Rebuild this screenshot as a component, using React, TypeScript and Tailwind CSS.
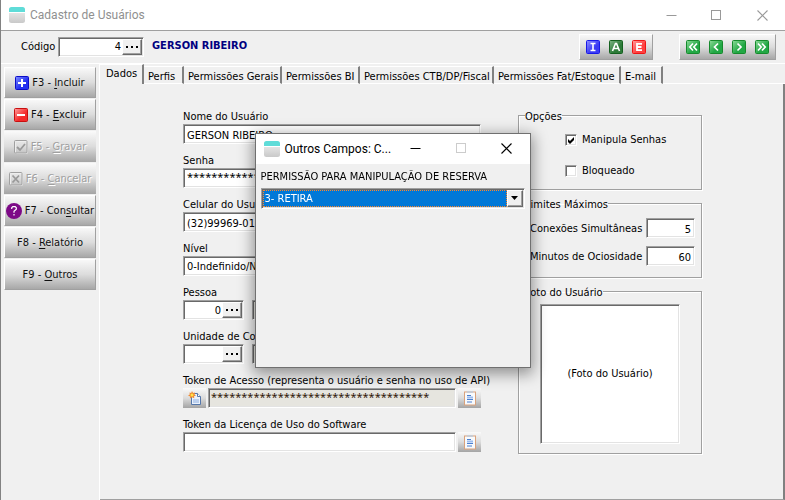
import { useState } from "react";
import type { ReactNode } from "react";

const SUNKEN =
  "border border-t-[#a0a0a0] border-l-[#a0a0a0] border-r-white border-b-white shadow-[inset_1px_1px_0_#696969,inset_-1px_-1px_0_#e3e3e3]";
const RAISED =
  "border border-t-white border-l-white border-r-[#696969] border-b-[#696969] bg-[#f0f0f0] shadow-[inset_-1px_-1px_0_#a0a0a0]";
const METAL = "bg-linear-to-b from-[#fafafa] via-[#dcdcdc] to-[#a4a4a4] bg-origin-border";
const BOX = "h-5 min-w-0 bg-white px-[3px] text-black outline-none";
const FIELD = `${BOX} pt-0.5`;

function AppLogo() {
  return (
    <svg className="size-4 shrink-0" viewBox="0 0 16 16" aria-hidden="true">
      <defs>
        <linearGradient id="logo-body" x1="0" y1="0" x2="0" y2="1">
          <stop offset="0" stopColor="#f4f4f4" />
          <stop offset="1" stopColor="#c9c9c9" />
        </linearGradient>
      </defs>
      <rect width="16" height="16" rx="2.5" fill="url(#logo-body)" />
      <path d="M0 5V2.5A2.5 2.5 0 0 1 2.5 0h11A2.5 2.5 0 0 1 16 2.5V5z" fill="#5fdcd8" />
      <path d="M0 5h16v1H0z" fill="#fff" />
    </svg>
  );
}

function WindowButtons({ color, maxColor }: { color: string; maxColor: string }) {
  return (
    <div className="flex h-full items-center">
      <button aria-label="Minimizar" className="flex h-full w-[46px] items-center justify-center">
        <svg width="11" height="11" viewBox="0 0 11 11">
          <path d="M0.5 5.5h10" stroke={color} />
        </svg>
      </button>
      <button aria-label="Maximizar" className="flex h-full w-[45px] items-center justify-center">
        <svg width="11" height="11" viewBox="0 0 11 11">
          <rect x="0.5" y="0.5" width="9" height="9" fill="none" stroke={maxColor} />
        </svg>
      </button>
      <button aria-label="Fechar" className="flex h-full w-[46px] items-center justify-center">
        <svg width="11" height="11" viewBox="0 0 11 11">
          <path d="M0.5 0.5l10 10M10.5 0.5l-10 10" stroke={color} strokeWidth="1.1" />
        </svg>
      </button>
    </div>
  );
}

function Ellipsis({ label }: { label: string }) {
  return (
    <button aria-label={label} className={`flex h-4 w-5 shrink-0 items-center justify-center ${RAISED}`}>
      <svg width="12" height="2" viewBox="0 0 12 2">
        <path d="M0 0h2v2H0zM5 0h2v2H5zM10 0h2v2h-2z" fill="#000" />
      </svg>
    </button>
  );
}

function LookupField({ id, value, label, width }: { id: string; value: string; label: string; width: string }) {
  return (
    <div className={`flex h-5 items-center bg-white p-px ${SUNKEN} ${width}`}>
      <input
        id={id}
        defaultValue={value}
        className="h-4 w-full min-w-0 bg-transparent pt-0.5 pr-px text-right outline-none"
      />
      <Ellipsis label={label} />
    </div>
  );
}

function SquareIcon({ from, to, edge, children }: { from: string; to: string; edge: string; children: ReactNode }) {
  const id = "sq" + edge.slice(1);
  return (
    <svg className="size-3.5 shrink-0" viewBox="0 0 14 14" aria-hidden="true">
      <defs>
        <linearGradient id={id} x1="0" y1="0" x2="1" y2="1">
          <stop offset="0" stopColor={from} />
          <stop offset="0.6" stopColor={to} />
        </linearGradient>
      </defs>
      <rect x="0.5" y="0.5" width="13" height="13" rx="1" fill={`url(#${id})`} stroke={edge} />
      {children}
    </svg>
  );
}

function GreenArrow({ d }: { d: string }) {
  return (
    <SquareIcon from="#8fdc9a" to="#22a845" edge="#168a2c">
      <path d={d} fill="none" stroke="#fff" strokeWidth="1.7" />
    </SquareIcon>
  );
}

function SideButton({
  icon,
  before,
  hot,
  after,
  disabled,
}: {
  icon?: ReactNode;
  before: string;
  hot: string;
  after: string;
  disabled?: boolean;
}) {
  return (
    <button
      disabled={disabled}
      className={`flex h-[31px] w-full items-center justify-center gap-[3px] border whitespace-nowrap ${METAL} ${
        disabled
          ? "border-transparent text-[#a0a0a0] [text-shadow:1px_1px_0_#fff]"
          : "border-t-white border-r-[#a0a0a0] border-b-[#a0a0a0] border-l-white text-[#101010]"
      }`}
    >
      {icon}
      <span className="pt-0.5">
        {before}
        <span className="underline underline-offset-2">{hot}</span>
        {after}
      </span>
    </button>
  );
}

function DisabledIcon({ children }: { children: ReactNode }) {
  return (
    <svg className="size-3.5 shrink-0" viewBox="0 0 14 14" aria-hidden="true">
      <rect x="1.5" y="1.5" width="12" height="12" rx="1" fill="none" stroke="#eee" />
      <rect x="0.5" y="0.5" width="12.5" height="12.5" rx="1" fill="none" stroke="#a0a0a0" />
      {children}
    </svg>
  );
}

function Field({ id, label, children }: { id: string; label: string; children: ReactNode }) {
  return (
    <div className="flex flex-col">
      <label htmlFor={id} className="h-4 leading-[18px] whitespace-nowrap">
        {label}
      </label>
      <div className="flex items-center">{children}</div>
    </div>
  );
}

function CopyButton({ label }: { label: string }) {
  return (
    <button aria-label={label} className={`flex h-5 w-[23px] shrink-0 items-center justify-center ${METAL}`}>
      <svg width="12" height="15" viewBox="0 0 12 15">
        <rect x="0.5" y="1" width="11" height="13" fill="#f8fafc" stroke="#d9a27c" />
        <rect x="3" y="0" width="6" height="2" fill="#c8ccd4" />
        <path d="M3 4.5h4M3 8.5h6M3 11h5" stroke="#4a7fd0" />
        <path d="M3 6.5h6" stroke="#9bbcf0" strokeWidth="2" />
      </svg>
    </button>
  );
}

function Check({ id, label, initial }: { id: string; label: string; initial: boolean }) {
  const [on, setOn] = useState(initial);
  return (
    <div className="flex items-center gap-[5px]">
      <span className="relative flex size-3">
        <input
          id={id}
          type="checkbox"
          checked={on}
          onChange={() => setOn(!on)}
          className={`size-3 appearance-none bg-white ${SUNKEN}`}
        />
        {on && (
          <svg className="pointer-events-none absolute inset-0 size-3" viewBox="0 0 12 12">
            <path d="M3 5v3l2 2 4-4V3L5 7z" fill="#000" />
          </svg>
        )}
      </span>
      <label htmlFor={id} className="whitespace-nowrap">
        {label}
      </label>
    </div>
  );
}

const TABS = [
  { name: "Perfis", width: "w-10" },
  { name: "Permissões Gerais", width: "w-[98px]" },
  { name: "Permissões BI", width: "w-[78px]" },
  { name: "Permissões CTB/DP/Fiscal", width: "w-[134px]" },
  { name: "Permissões Fat/Estoque", width: "w-[127px]" },
  { name: "E-mail", width: "w-[42px]" },
];

const GROUP = "min-w-0 border border-[#a0a0a0] shadow-[1px_1px_0_#fff,inset_1px_1px_0_#fff]";
const LEGEND = "ml-1.5 h-3.5 leading-[18px]";

export default function App() {
  return (
    <div className="flex min-h-screen flex-col border-l border-[#828282] bg-[#f0f0f0] font-['DejaVu_Sans_Condensed','Noto_Sans',sans-serif] text-[11px] text-black">
      <header className="flex h-[30px] shrink-0 items-center justify-between bg-white">
        <h1 className="flex items-center gap-[5px] pl-2 font-['Roboto',sans-serif] text-xs text-[#909090]">
          <AppLogo />
          Cadastro de Usuários
        </h1>
        <WindowButtons color="#999999" maxColor="#999999" />
      </header>

      <div className="flex h-[34px] shrink-0 items-center border-t border-b border-t-[#a0a0a0] border-b-white pr-[9px] pb-px pl-5">
        <label htmlFor="codigo" className="w-[37px] pt-0.5">
          Código
        </label>
        <LookupField id="codigo" value="4" label="Buscar código" width="w-[86px]" />
        <strong className="ml-2 text-[#000080]">GERSON RIBEIRO</strong>
        <div
          className={`ml-auto flex h-[26px] items-center gap-[9px] border border-t-white border-r-[#a0a0a0] border-b-[#a0a0a0] border-l-white px-1.5 ${METAL}`}
        >
          <button aria-label="Incluir">
            <SquareIcon from="#8f8fff" to="#3a3af4" edge="#1818e8">
              <path d="M4.5 3.5h5M7 3.5v7M4.5 10.5h5" stroke="#fff" strokeWidth="1.6" />
            </SquareIcon>
          </button>
          <button aria-label="Alterar">
            <SquareIcon from="#7fb685" to="#2c7a38" edge="#14601e">
              <path d="M3.5 11L6.5 3.5h1l3 7.500M4.800 8.500h4.500" fill="none" stroke="#fff" strokeWidth="1.6" />
            </SquareIcon>
          </button>
          <button aria-label="Excluir">
            <SquareIcon from="#ff9f9f" to="#ff4040" edge="#ee1414">
              <path d="M10 3.800H5v6.400h5M5 7h4.500" fill="none" stroke="#fff" strokeWidth="1.8" />
            </SquareIcon>
          </button>
        </div>
        <div
          className={`ml-[26px] flex h-[26px] items-center gap-[9px] border border-t-white border-r-[#a0a0a0] border-b-[#a0a0a0] border-l-white px-1.5 ${METAL}`}
        >
          <button aria-label="Primeiro">
            <GreenArrow d="M7 3.500L3.800 7 7 10.500M11 3.500L7.800 7 11 10.500" />
          </button>
          <button aria-label="Anterior">
            <GreenArrow d="M9 3.500L5.500 7 9 10.500" />
          </button>
          <button aria-label="Próximo">
            <GreenArrow d="M5.500 3.500L9 7 5.500 10.500" />
          </button>
          <button aria-label="Último">
            <GreenArrow d="M3 3.500L6.200 7 3 10.500M7 3.500L10.200 7 7 10.500" />
          </button>
        </div>
      </div>

      <div className="flex flex-1">
        <nav className="flex w-[99px] shrink-0 flex-col gap-px border-r border-r-white pt-[3px] pr-[3px] pl-[3px]">
          <SideButton
            before="F3 - "
            hot="I"
            after="ncluir"
            icon={
              <SquareIcon from="#7f8fff" to="#2430f0" edge="#0c0cc8">
                <path d="M7 3v8M3 7h8" stroke="#fff" strokeWidth="2" />
              </SquareIcon>
            }
          />
          <SideButton
            before="F4 - "
            hot="E"
            after="xcluir"
            icon={
              <SquareIcon from="#ffa0a0" to="#f42a2a" edge="#c81010">
                <path d="M3 7h8" stroke="#fff" strokeWidth="2" />
              </SquareIcon>
            }
          />
          <SideButton
            disabled
            before="F5 - "
            hot="G"
            after="ravar"
            icon={
              <DisabledIcon>
                <path d="M3 7l3 3 5-6" fill="none" stroke="#999" strokeWidth="1.8" />
              </DisabledIcon>
            }
          />
          <SideButton
            disabled
            before="F6 - "
            hot="C"
            after="ancelar"
            icon={
              <DisabledIcon>
                <path d="M3.500 3.500l6.500 7M10 3.500l-6.500 7" stroke="#999" strokeWidth="1.8" />
              </DisabledIcon>
            }
          />
          <SideButton
            before="F7 - Con"
            hot="s"
            after="ultar"
            icon={
              <svg className="size-4 shrink-0" viewBox="0 0 16 16" aria-hidden="true">
                <circle cx="8" cy="8" r="8" fill="#7d0a87" />
                <path
                  d="M5.700 6V4.800L6.800 3.700h2.400l1.100 1.100v1.500L8 8.300v1.400M8 11v1.500"
                  fill="none"
                  stroke="#fff"
                  strokeWidth="1.200"
                />
              </svg>
            }
          />
          <SideButton before="F8 - " hot="R" after="elatório" />
          <SideButton before="F9 - " hot="O" after="utros" />
        </nav>

        <main className="flex min-w-0 flex-1 flex-col">
          <div role="tablist" className="flex h-5 shrink-0 items-end">
            <button
              role="tab"
              aria-selected="true"
              className="h-5 w-11 border-t border-r-2 border-t-white border-r-[#808080] pl-1.5 text-left"
            >
              Dados
            </button>
            {TABS.map((tab) => (
              <button
                key={tab.name}
                role="tab"
                aria-selected="false"
                className={`h-[18px] border-t border-r-2 border-b border-t-white border-r-[#808080] border-b-white pt-0.5 pl-1 text-left whitespace-nowrap ${tab.width}`}
              >
                {tab.name}
              </button>
            ))}
            <div className="h-px flex-1 bg-white" />
          </div>

          <div
            role="tabpanel"
            className="flex flex-1 items-start justify-center gap-[37px] border-r-2 border-b border-r-[#808080] border-b-[#a0a0a0] pt-6 pl-0.5"
          >
            <form className="flex w-[298px] flex-col gap-2">
              <Field id="nome" label="Nome do Usuário">
                <input id="nome" defaultValue="GERSON RIBEIRO" className={`w-full ${FIELD} ${SUNKEN}`} />
              </Field>
              <Field id="senha" label="Senha">
                <input
                  id="senha"
                  defaultValue="****************"
                  className={`w-full pb-1 font-['Noto_Sans',sans-serif] ${BOX} ${SUNKEN}`}
                />
              </Field>
              <Field id="celular" label="Celular do Usuário">
                <input id="celular" defaultValue="(32)99969-010" className={`w-full ${FIELD} ${SUNKEN}`} />
              </Field>
              <Field id="nivel" label="Nível">
                <select id="nivel" className={`w-full appearance-none ${FIELD} ${SUNKEN}`}>
                  <option>0-Indefinido/N</option>
                </select>
              </Field>
              <Field id="pessoa" label="Pessoa">
                <LookupField id="pessoa" value="0" label="Buscar pessoa" width="w-[61px]" />
                <input
                  aria-label="Nome da pessoa"
                  readOnly
                  className={`ml-2 h-5 min-w-0 flex-1 bg-[#e6e5df] px-1 ${SUNKEN}`}
                />
              </Field>
              <Field id="unidade" label="Unidade de Coo">
                <LookupField id="unidade" value="" label="Buscar unidade" width="w-[61px]" />
                <input
                  aria-label="Nome da unidade"
                  readOnly
                  className={`ml-2 h-5 min-w-0 flex-1 bg-[#e6e5df] px-1 ${SUNKEN}`}
                />
              </Field>
              <Field id="token" label="Token de Acesso (representa o usuário e senha no uso de API)">
                <button
                  type="button"
                  aria-label="Gerar token"
                  className={`mr-0.5 flex h-5 w-[23px] shrink-0 items-center justify-center ${METAL}`}
                >
                  <svg width="14" height="15" viewBox="0 0 14 15">
                    <path d="M3.500 2.500h6l3 3v8h-9z" fill="#eaf1fb" stroke="#5577aa" />
                    <path d="M9.500 2.500v3h3" fill="#fff" stroke="#5577aa" />
                    <path d="M5 8h6v4H5z" fill="#bcd0ee" />
                    <path d="M4 0l1 2 2-.5L6.500 3.500 8 4.500l-2 .8.3 2L4 6.300 2 7.500l.2-2L0 4.500l1.800-1L1.500 1.500 3.200 2z" fill="#f08a30" />
                    <circle cx="4" cy="4" r="1.500" fill="#ffe24a" />
                  </svg>
                </button>
                <input
                  id="token"
                  readOnly
                  defaultValue="************************************"
                  className={`h-5 min-w-0 flex-1 bg-[#e6e5df] px-0.5 pb-1 font-['Noto_Sans',sans-serif] text-[#301808] outline-none ${SUNKEN}`}
                />
                <div className="ml-0.5 flex">
                  <CopyButton label="Copiar token de acesso" />
                </div>
              </Field>
              <Field id="licenca" label="Token da Licença de Uso do Software">
                <input id="licenca" className={`flex-1 ${FIELD} ${SUNKEN}`} />
                <div className="ml-0.5 flex">
                  <CopyButton label="Copiar token da licença" />
                </div>
              </Field>
            </form>

            <aside className="flex w-[184px] flex-col gap-1.5">
              <fieldset className={`h-[82px] ${GROUP}`}>
                <legend className={LEGEND}>Opções</legend>
                <div className="flex flex-col gap-3.5 pt-2.5 pl-[46px]">
                  <Check id="manipula" label="Manipula Senhas" initial={true} />
                  <Check id="bloqueado" label="Bloqueado" initial={false} />
                </div>
              </fieldset>
              <fieldset className={`h-[82px] ${GROUP}`}>
                <legend className={LEGEND}>Limites Máximos</legend>
                <div className="flex flex-col gap-2 pt-2 pr-1.5 pl-[11px]">
                  <div className="flex items-center justify-between">
                    <label htmlFor="conexoes" className="pt-0.5 whitespace-nowrap">
                      Conexões Simultâneas
                    </label>
                    <input id="conexoes" defaultValue="5" className={`w-[49px] text-right ${FIELD} ${SUNKEN}`} />
                  </div>
                  <div className="flex items-center justify-between">
                    <label htmlFor="minutos" className="pt-0.5 whitespace-nowrap">
                      Minutos de Ociosidade
                    </label>
                    <input id="minutos" defaultValue="60" className={`w-[49px] text-right ${FIELD} ${SUNKEN}`} />
                  </div>
                </div>
              </fieldset>
              <fieldset className={`h-[170px] ${GROUP}`}>
                <legend className={LEGEND}>Foto do Usuário</legend>
                <div
                  className={`mx-auto mt-1.5 flex h-[140px] w-[140px] items-center justify-center bg-white ${SUNKEN}`}
                >
                  (Foto do Usuário)
                </div>
              </fieldset>
            </aside>
          </div>
        </main>
      </div>

      <div className="fixed inset-0 flex items-center justify-center">
        <section
          role="dialog"
          aria-label="Outros Campos"
          className="h-[235px] w-[276px] border border-[#707070] bg-[#f0f0f0] shadow-[0_4px_14px_2px_rgba(0,0,0,0.4)]"
        >
          <header className="flex h-[30px] items-center bg-white">
            <h2 className="flex flex-1 items-center gap-[5px] pl-2 font-['Roboto',sans-serif] text-xs whitespace-nowrap">
              <AppLogo />
              Outros Campos: C...
            </h2>
            <WindowButtons color="#000000" maxColor="#cccccc" />
          </header>
          <div className="flex flex-col gap-0.5 px-[5px] pt-1">
            <label htmlFor="permissao" className="leading-[18px] whitespace-nowrap">
              PERMISSÃO PARA MANIPULAÇÃO DE RESERVA
            </label>
            <div className={`flex h-[21px] bg-white p-px ${SUNKEN}`}>
              <select
                id="permissao"
                className="h-[17px] min-w-0 flex-1 appearance-none border border-dotted border-[#ff8728] bg-[#0078d7] px-px text-white outline-none"
              >
                <option>3- RETIRA</option>
              </select>
              <span className={`pointer-events-none flex h-[17px] w-4 items-center justify-center ${RAISED}`}>
                <svg width="7" height="4" viewBox="0 0 7 4">
                  <path d="M0 0h7L3.500 4z" fill="#000" />
                </svg>
              </span>
            </div>
          </div>
        </section>
      </div>
    </div>
  );
}
